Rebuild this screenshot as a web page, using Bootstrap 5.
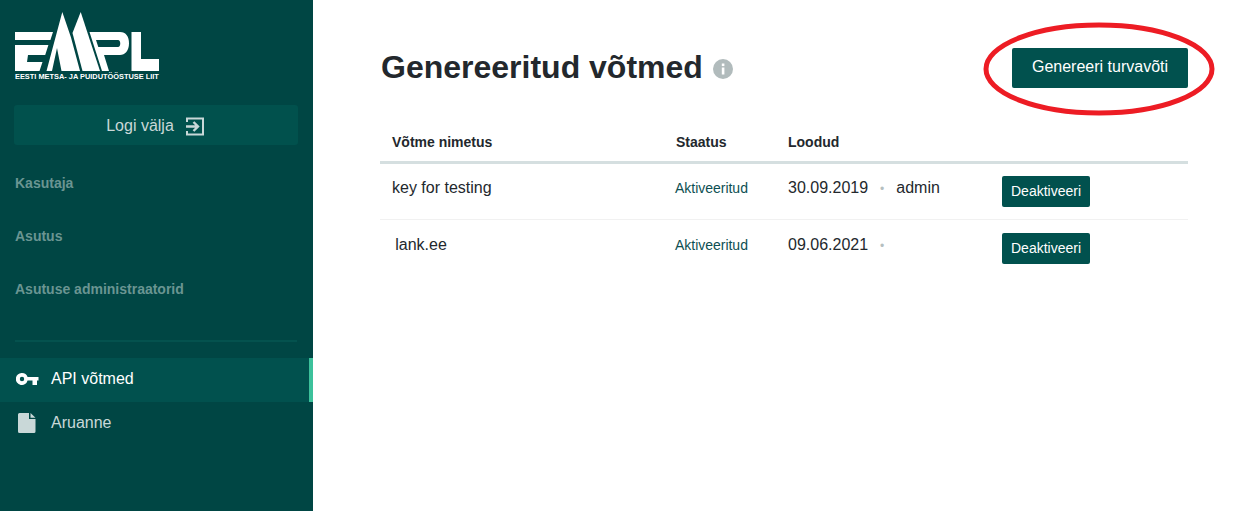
<!DOCTYPE html>
<html lang="et">
<head>
  <meta charset="UTF-8">
  <title>API võtmed</title>
  <link href="https://cdn.jsdelivr.net/npm/bootstrap@5.3.0/dist/css/bootstrap.min.css" rel="stylesheet">
  <style>
    html, body { height: 100%; overflow: hidden; }
    body { font-family: "Liberation Sans", Arial, sans-serif; color: #23282d; }
    .app-side { width: 313px; height: 511px; background: #004644; flex: none; }
    .side-logo { padding: 12px 0 0 15px; height: 105px; }
    .logo-caption { font-size: 7.4px; font-weight: 700; line-height: 8px; color: #fff; margin-top: 2px; white-space: nowrap; }
    .logout-btn { margin: 0 15px 0 14px; height: 40px; padding: 2px 2px 0 0; background: #01514d; color: #c9d8d8; font-size: 16px; border: 0; border-radius: 3px; width: 284px; }
    .logout-btn svg { margin-left: 12px; }
    .side-head { display: block; margin: 0 15px; height: 53px; line-height: 53px; font-size: 14px; font-weight: 700; color: #6a9592; text-decoration: none; }
    .side-first { margin-top: 12px; }
    .side-rule { margin: 24px 16px 16px 15px; height: 2px; background: #04524e; }
    .side-link { height: 44px; padding-left: 16px; padding-bottom: 2px; font-size: 16px; color: #c9d8d8; text-decoration: none; }
    .side-link.on { background: #01514e; color: #fff; border-right: 4px solid #3cc19b; }
    .side-ico { width: 35px; flex: none; }
    .content-area { padding: 48px 52px 0 67px; }
    .title-wrap { padding-bottom: 2px; }
    .page-title { font-size: 32px; font-weight: 700; margin: 0 0 0 1px; color: #23282d; }
    .info-dot { margin-left: 10px; margin-top: 4px; }
    .main-btn { width: 176px; height: 40px; background: #01514e; color: #fff; font-size: 16px; border-radius: 2px; border: 0; padding: 0 0 3px; }
    .main-btn:hover, .row-btn:hover { background: #01514e; color: #fff; }
    .key-table { margin: 33px 0 0 0; width: 808px; table-layout: fixed; }
    .key-table th { font-size: 14px; color: #23282d; padding: 11px 12px 8px; border-bottom: 3px solid #d5dfe0; }
    .key-table th + th { padding-left: 13px; }
    .key-table th + th + th { padding-left: 12px; }
    .key-table td { padding: 0 12px; height: 57px; border-bottom: 1px solid #f1f1f1; vertical-align: middle; color: #23282d; }
    .key-table tr:last-child td { border-bottom: 0; }
    .key-table td > div { margin-top: -7px; }
    .key-table td.state-cell { font-size: 14px; color: #0d4f52; letter-spacing: -.02px; }
    .key-table td.state-cell > div { margin-top: -6px; }
    .sep-dot { color: #b5bfc0; font-size: 12px; margin: 0 12px; }
    .row-btn { height: 31px; padding: 0 9px; background: #01514e; color: #fff; font-size: 14px; border-radius: 2px; border: 0; margin-left: 1px; }
    .hand-ring { position: absolute; left: 983px; top: 22px; pointer-events: none; }
  </style>
</head>
<body>
  <div class="d-flex">

    <!-- Sidebar -->
    <aside class="app-side">
      <div class="side-logo">
        <svg width="144" height="59" viewBox="15 12 144 59" class="d-block" fill="#fff">
          <!-- E bars -->
          <path d="M15 32h38l-2.600 8H15zM15 45h33.400l-3.200 10H28l-1 7h15.500L39.500 71H15z"/>
          <!-- trees -->
          <path d="M62.300 12 71 37.500 80 71H61.500L57 48 52 71H46.500z"/>
          <path d="M80.700 12 100 71H82.500L72.500 33z"/>
          <!-- P -->
          <path fill-rule="evenodd" d="M89.500 32H120c6 0 9 4.500 9 11.500S125 55 120 55h-16l5 16h-7zM96 40l2.300 7H118c3 0 3-7 0-7z"/>
          <!-- L -->
          <path d="M131.500 32h9.500v27h18v12h-27.500z"/>
        </svg>
        <div class="logo-caption">EESTI METSA- JA PUIDUTÖÖSTUSE LIIT</div>
      </div>
      <button class="logout-btn d-flex align-items-center justify-content-center" type="button">
        Logi välja
        <svg width="18" height="19" viewBox="0 0 18 19" fill="none" stroke="#c9d8d8" stroke-width="2">
          <path d="M1 5V1.500h16v16H1V14"/>
          <path d="M0 9.500h11.500M7.500 5l4.500 4.500L7.500 14" stroke-width="2.400"/>
        </svg>
      </button>
      <a class="side-head side-first" href="#">Kasutaja</a>
      <a class="side-head" href="#">Asutus</a>
      <a class="side-head" href="#">Asutuse administraatorid</a>
      <div class="side-rule"></div>
      <a class="side-link on d-flex align-items-center" href="#">
        <span class="side-ico">
          <svg width="23" height="12" viewBox="0 0 23 12" class="d-block">
            <path fill="#fff" fill-rule="evenodd" d="M6 0a6 6 0 0 1 5.600 4H22.500v3.500H21V12h-4.500V7.500h-4.900A6 6 0 1 1 6 0zM6 3.800a2.200 2.200 0 1 0 0 4.400 2.200 2.200 0 0 0 0-4.400z"/>
          </svg>
        </span>
        API võtmed
      </a>
      <a class="side-link d-flex align-items-center" href="#">
        <span class="side-ico">
          <svg width="18" height="20" viewBox="0 0 18 20" class="d-block" style="margin-left:2px">
            <path fill="#c9d8d8" d="M1.500 0H11v6h6.500v12.500a1.500 1.500 0 0 1-1.500 1.500H1.500A1.500 1.500 0 0 1 0 18.500v-17A1.500 1.500 0 0 1 1.500 0zM12.500 0l5 4.800h-5z"/>
          </svg>
        </span>
        Aruanne
      </a>
    </aside>

    <!-- Main -->
    <main class="content-area flex-grow-1">
      <div class="d-flex align-items-center justify-content-between">
        <div class="d-flex align-items-center title-wrap">
          <h1 class="page-title">Genereeritud võtmed</h1>
          <svg class="info-dot" width="20" height="20" viewBox="0 0 20 20">
            <circle cx="10" cy="10" r="10" fill="#b1bbbc"/>
            <rect x="8.800" y="8.500" width="2.600" height="7" fill="#fff"/>
            <rect x="8.800" y="4.500" width="2.600" height="2.600" fill="#fff"/>
          </svg>
        </div>
        <button class="btn main-btn" type="button">Genereeri turvavõti</button>
      </div>

      <table class="table key-table">
        <colgroup>
          <col style="width:283px"><col style="width:113px"><col style="width:213px"><col>
        </colgroup>
        <thead>
          <tr><th>Võtme nimetus</th><th>Staatus</th><th>Loodud</th><th></th></tr>
        </thead>
        <tbody>
          <tr>
            <td><div>key for testing</div></td>
            <td class="state-cell"><div>Aktiveeritud</div></td>
            <td><div>30.09.2019<span class="sep-dot">•</span>admin</div></td>
            <td><button class="btn row-btn" type="button">Deaktiveeri</button></td>
          </tr>
          <tr>
            <td><div>&#8201;lank.ee</div></td>
            <td class="state-cell"><div>Aktiveeritud</div></td>
            <td><div>09.06.2021<span class="sep-dot">•</span></div></td>
            <td><button class="btn row-btn" type="button">Deaktiveeri</button></td>
          </tr>
        </tbody>
      </table>
    </main>
  </div>

  <!-- red marker ring drawn over the screenshot -->
  <svg class="hand-ring" width="232" height="94" viewBox="0 0 232 94" fill="none">
    <ellipse cx="116" cy="47" rx="113" ry="44" stroke="#ed1c24" stroke-width="5"/>
  </svg>

  <script src="https://cdn.jsdelivr.net/npm/bootstrap@5.3.0/dist/js/bootstrap.bundle.min.js"></script>
</body>
</html>
